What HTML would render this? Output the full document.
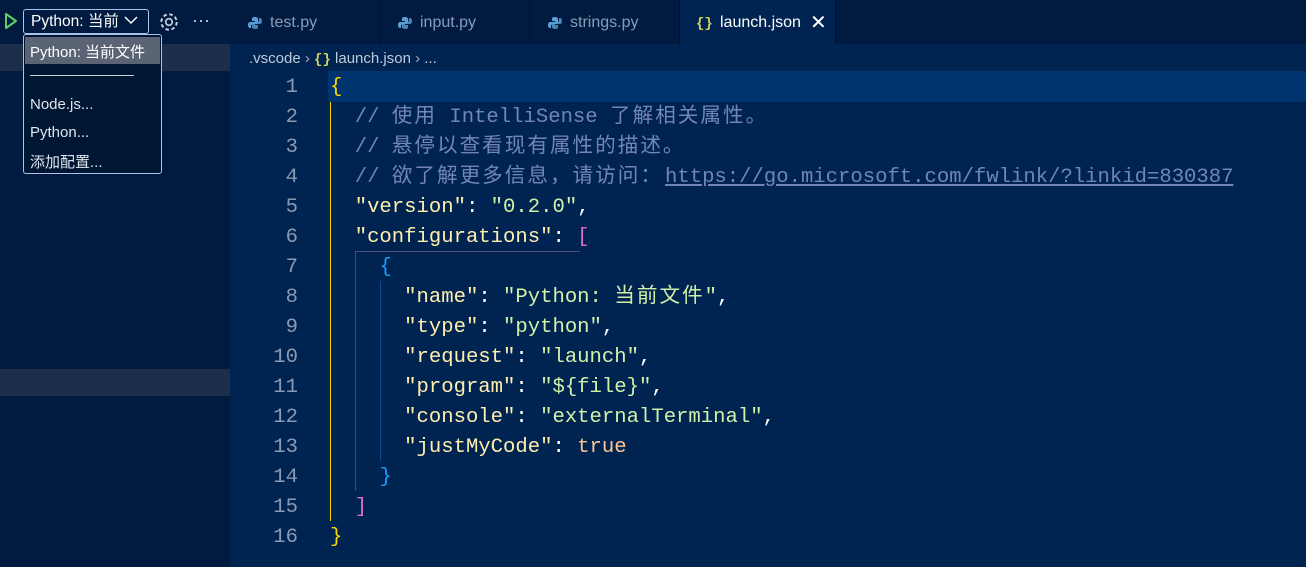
<!DOCTYPE html>
<html><head><meta charset="utf-8"><style>
*{margin:0;padding:0;box-sizing:border-box}
body{width:1306px;height:567px;overflow:hidden;background:#002451;position:relative;font-family:"Liberation Sans","Noto Sans CJK SC",sans-serif}
.abs{position:absolute}
#side{left:0;top:0;width:230px;height:567px;background:#001b3f}
#tabs{left:230px;top:0;width:1076px;height:44px;background:#001b3f}
.tab{position:absolute;top:0;height:44px;border-right:1px solid #00112a;color:#8a9bb8;font-size:16px;line-height:46px;padding-left:40px}
.tab.active{background:#002451;color:#fff}
.py{position:absolute;left:18px;top:16px;width:14px;height:14px}
.brc{position:absolute;color:#d4d462;font-weight:bold;font-family:"Liberation Mono",monospace;font-size:14px}
#code{left:230px;top:73px;width:1076px}
.ln{position:absolute;left:0;width:68px;text-align:right;color:#8a9ab4;font-family:"Liberation Mono",monospace;font-size:20.6px;line-height:30px}
.cl{position:absolute;left:100px;white-space:pre;font-family:"Liberation Mono","Noto Sans CJK SC",monospace;font-size:20.6px;line-height:30px;color:#fff}
.z{letter-spacing:2px}
.c{color:#7285b7}.k{color:#ffeead}.s{color:#d1f1a9}.t{color:#ffc58f}.p{color:#fff}
.y{color:#ffd700}.m{color:#da70d6}.b{color:#179fff}
#menu{left:23px;top:34px;width:139px;height:140px;background:#001733;border:1px solid #a9c4e8;border-radius:3px;font-size:15px;color:#e0e6ee}
#menu div{position:absolute;left:6px;white-space:nowrap}
</style></head><body>
<div id="side" class="abs"></div>
<div class="abs" style="left:0;top:44px;width:230px;height:27px;background:#1d2e4a"></div>
<div class="abs" style="left:0;top:369px;width:230px;height:27px;background:#1d2e4a"></div>

<svg class="abs" style="left:3px;top:12px" width="16" height="18" viewBox="0 0 16 18"><path d="M3 2 L13 9 L3 16 Z" fill="none" stroke="#5fd068" stroke-width="2" stroke-linejoin="round"/></svg>
<div class="abs" style="left:23px;top:9px;width:126px;height:25px;border:1px solid #a9c4e8;border-radius:3px;color:#fff;font-size:15.5px;line-height:23px;padding-left:7px;overflow:hidden;white-space:nowrap">Python: 当前</div>
<div class="abs" style="left:122px;top:10px;width:24px;height:22px;background:#001b3f"></div>
<svg class="abs" style="left:124px;top:15px" width="14" height="10"><path d="M1 2 L7 8 L13 2" fill="none" stroke="#fff" stroke-width="1.5"/></svg>
<svg class="abs" style="left:158px;top:11px" width="22" height="22" viewBox="0 0 20 20"><circle cx="10" cy="10" r="3" fill="none" stroke="#c8d0dc" stroke-width="1.5"/><circle cx="10" cy="10" r="7" fill="none" stroke="#c8d0dc" stroke-width="1.8" stroke-dasharray="3.2 2.3"/></svg>
<div class="abs" style="left:192px;top:10px;color:#c8d0dc;font-size:18px">···</div>

<div id="tabs" class="abs">
 <div class="tab" style="left:0;width:150px">test.py<svg class="py" viewBox="0 0 14 14"><path d="M7 1C4 1 4 2 4 3v2h3v1H2C1 6 0 7 0 9s1 3 2 3h1v-2c0-1 1-2 2-2h3c1 0 2-1 2-2V3c0-1-1-2-3-2z" fill="#5a9fd4"/><path d="M7 13c3 0 3-1 3-2V9H7V8h5c1 0 2-1 2-3s-1-3-2-3h-1v2c0 1-1 2-2 2H6C5 6 4 7 4 8v3c0 1 1 2 3 2z" fill="#5a9fd4" opacity=".8"/></svg></div>
 <div class="tab" style="left:150px;width:150px">input.py<svg class="py" viewBox="0 0 14 14"><path d="M7 1C4 1 4 2 4 3v2h3v1H2C1 6 0 7 0 9s1 3 2 3h1v-2c0-1 1-2 2-2h3c1 0 2-1 2-2V3c0-1-1-2-3-2z" fill="#5a9fd4"/><path d="M7 13c3 0 3-1 3-2V9H7V8h5c1 0 2-1 2-3s-1-3-2-3h-1v2c0 1-1 2-2 2H6C5 6 4 7 4 8v3c0 1 1 2 3 2z" fill="#5a9fd4" opacity=".8"/></svg></div>
 <div class="tab" style="left:300px;width:150px">strings.py<svg class="py" viewBox="0 0 14 14"><path d="M7 1C4 1 4 2 4 3v2h3v1H2C1 6 0 7 0 9s1 3 2 3h1v-2c0-1 1-2 2-2h3c1 0 2-1 2-2V3c0-1-1-2-3-2z" fill="#5a9fd4"/><path d="M7 13c3 0 3-1 3-2V9H7V8h5c1 0 2-1 2-3s-1-3-2-3h-1v2c0 1-1 2-2 2H6C5 6 4 7 4 8v3c0 1 1 2 3 2z" fill="#5a9fd4" opacity=".8"/></svg></div>
 <div class="tab active" style="left:450px;width:156px;padding-left:40px">launch.json<span class="brc" style="left:16px;top:1px">{}</span><span style="position:absolute;left:130px;top:0;font-size:20px">✕</span></div>
</div>

<div class="abs" style="left:249px;top:50px;font-size:15px;color:#c0cad8;white-space:nowrap">.vscode <span style="color:#aab">›</span> <span style="color:#d4d462;font-weight:bold;font-family:'Liberation Mono',monospace;font-size:14px">{}</span> launch.json <span style="color:#aab">›</span> ...</div>

<div class="abs" style="left:328px;top:71px;width:978px;height:31px;background:#00346e"></div>
<div class="abs" style="left:330px;top:102px;width:1px;height:419px;background:#ffd700"></div>
<div class="abs" style="left:355px;top:251px;width:1px;height:240px;background:#3a4f78"></div>
<div class="abs" style="left:355px;top:251px;width:225px;height:1px;background:#5a4a7a"></div>
<div class="abs" style="left:380px;top:281px;width:1px;height:180px;background:#0d4a8a"></div>

<div id="code" class="abs">
 <div class="ln" style="top:0">1</div><div class="ln" style="top:30px">2</div><div class="ln" style="top:60px">3</div><div class="ln" style="top:90px">4</div><div class="ln" style="top:120px">5</div><div class="ln" style="top:150px">6</div><div class="ln" style="top:180px">7</div><div class="ln" style="top:210px">8</div><div class="ln" style="top:240px">9</div><div class="ln" style="top:270px">10</div><div class="ln" style="top:300px">11</div><div class="ln" style="top:330px">12</div><div class="ln" style="top:360px">13</div><div class="ln" style="top:390px">14</div><div class="ln" style="top:420px">15</div><div class="ln" style="top:450px">16</div>
 <div class="cl" style="top:0"><span class="y">{</span></div>
 <div class="cl c" style="top:30px">  // <span class="z">使用</span> IntelliSense <span class="z">了解相关属性。</span></div>
 <div class="cl c" style="top:60px">  // <span class="z">悬停以查看现有属性的描述。</span></div>
 <div class="cl c" style="top:90px">  // <span class="z">欲了解更多信息，请访问：</span></div>
 <div class="cl c" style="top:90px;left:435px;text-decoration:underline">https://go.microsoft.com/fwlink/?linkid=830387</div>
 <div class="cl" style="top:120px">  <span class="k">"version"</span>: <span class="s">"0.2.0"</span>,</div>
 <div class="cl" style="top:150px">  <span class="k">"configurations"</span>: <span class="m">[</span></div>
 <div class="cl" style="top:180px">    <span class="b">{</span></div>
 <div class="cl" style="top:210px">      <span class="k">"name"</span>: <span class="s">"Python: <span class="z">当前文件</span>"</span>,</div>
 <div class="cl" style="top:240px">      <span class="k">"type"</span>: <span class="s">"python"</span>,</div>
 <div class="cl" style="top:270px">      <span class="k">"request"</span>: <span class="s">"launch"</span>,</div>
 <div class="cl" style="top:300px">      <span class="k">"program"</span>: <span class="s">"${file}"</span>,</div>
 <div class="cl" style="top:330px">      <span class="k">"console"</span>: <span class="s">"externalTerminal"</span>,</div>
 <div class="cl" style="top:360px">      <span class="k">"justMyCode"</span>: <span class="t">true</span></div>
 <div class="cl" style="top:390px">    <span class="b">}</span></div>
 <div class="cl" style="top:420px">  <span class="m">]</span></div>
 <div class="cl" style="top:450px"><span class="y">}</span></div>
</div>

<div id="menu" class="abs">
 <div style="left:1px;top:2px;width:135px;height:27px;background:#5a6475"></div>
 <div style="top:6px;color:#fff">Python: 当前文件</div>
 <div style="top:40px;width:104px;height:1px;background:#c8d0dc"></div>
 <div style="top:61px">Node.js...</div>
 <div style="top:89px">Python...</div>
 <div style="top:116px">添加配置...</div>
</div>
</body></html>
